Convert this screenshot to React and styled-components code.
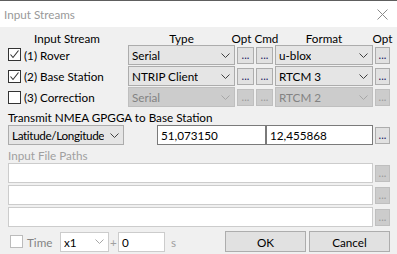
import React from 'react';
import styled, { createGlobalStyle } from 'styled-components';

const GlobalStyle = createGlobalStyle`
  html, body {
    margin: 0;
    padding: 0;
    background: #f0f0f0;
  }
  body {
    font-family: "Segoe UI", Lato, "Liberation Sans", sans-serif;
    font-size: 11.7px;
    color: #000;
  }
`;

const streams = [
  { id: 1, label: '(1) Rover', checked: true, type: 'Serial', format: 'u-blox', enabled: true },
  { id: 2, label: '(2) Base Station', checked: true, type: 'NTRIP Client', format: 'RTCM 3', enabled: true },
  { id: 3, label: '(3) Correction', checked: false, type: 'Serial', format: 'RTCM 2', enabled: false },
];

const Chevron = ({ disabled }) => (
  <svg width="9" height="5" viewBox="0 0 9 5">
    <path d="M0.5 0.5 L4.5 4.5 L8.5 0.5" fill="none" stroke={disabled ? '#a6a6a6' : '#404040'} strokeWidth="1" />
  </svg>
);

const Check = () => (
  <svg width="11" height="11" viewBox="0 0 11 11">
    <path d="M1.5 5.5 L4 8.5 L9.5 1.5" fill="none" stroke="#333" strokeWidth="1.1" />
  </svg>
);

const CheckBox = ({ checked, disabled }) => (
  <Box $disabled={disabled}>{checked && <Check />}</Box>
);

const Combo = ({ value, width, disabled, flat, tight }) => (
  <ComboBox $width={width} $disabled={disabled} $flat={flat}>
    <ComboText $tight={tight}>{value}</ComboText>
    <Chevron disabled={disabled || flat} />
  </ComboBox>
);

const App = () => {
  return (
    <Window>
      <GlobalStyle />
      <TopEdge />
      <TitleBar>
        <Title>Input Streams</Title>
        <svg width="11" height="11" viewBox="0 0 11 11">
          <path d="M0.5 0.5 L10.5 10.5 M10.5 0.5 L0.5 10.5" stroke="#8a8a8a" strokeWidth="1" />
        </svg>
      </TitleBar>
      <Body>
        <StreamGrid>
          <Head>Input Stream</Head>
          <Head>Type</Head>
          <Head $span={2}>Opt Cmd</Head>
          <Head>Format</Head>
          <Head>Opt</Head>
          {streams.map(s => (
            <React.Fragment key={s.id}>
              <StreamName>
                <CheckBox checked={s.checked} />
                <span>{s.label}</span>
              </StreamName>
              <Combo value={s.type} disabled={!s.enabled} />
              <DotButton $disabled={!s.enabled}>...</DotButton>
              <DotButton $disabled={!s.enabled}>...</DotButton>
              <Combo value={s.format} disabled={!s.enabled} />
              <DotButton $disabled={!s.enabled}>...</DotButton>
            </React.Fragment>
          ))}
        </StreamGrid>

        <Label>Transmit NMEA GPGGA to Base Station</Label>
        <PosRow>
          <Combo value="Latitude/Longitude" width={116} tight />
          <Field $width={109} $left={33}>51,073150</Field>
          <Field $width={107}>12,455868</Field>
          <DotButton>...</DotButton>
        </PosRow>

        <Label $disabled>Input File Paths</Label>
        <PathList>
          {[0, 1, 2].map(i => (
            <PathRow key={i}>
              <Field $width={365} $disabled />
              <DotButton $disabled>...</DotButton>
            </PathRow>
          ))}
        </PathList>

        <Footer>
          <TimeToggle>
            <CheckBox disabled />
            <span>Time</span>
          </TimeToggle>
          <Combo value="x1" width={49} flat />
          <Muted>+</Muted>
          <Field $width={47} $disabled>0</Field>
          <Muted $left={4}>s</Muted>
          <PushButton $left="auto">OK</PushButton>
          <PushButton>Cancel</PushButton>
        </Footer>
      </Body>
    </Window>
  );
};

const Window = styled.div`
  width: 397px;
  height: 254px;
  overflow: hidden;
  background: #f0f0f0;
`;

const TopEdge = styled.div`
  height: 1px;
  background: #5e5e5e;
`;

const TitleBar = styled.div`
  height: 26px;
  background: #fff;
  display: flex;
  align-items: center;
  justify-content: space-between;
  padding: 0 9px 0 4px;
  svg { margin-top: 1px; }
`;

const Title = styled.div`
  color: #999;
`;

const Body = styled.div`
  padding: 1px 7px 0 8px;
`;

const StreamGrid = styled.div`
  display: grid;
  grid-template-columns: 118px 107px 17px 17px 98px 15px;
  grid-template-rows: 16px repeat(3, 20px);
  column-gap: 2px;
  row-gap: 1px;
  align-items: center;
  & > :nth-child(6) { margin-bottom: 1px; }
`;

const Head = styled.div`
  grid-column: span ${p => p.$span || 1};
  display: flex;
  justify-content: center;
  white-space: nowrap;
  line-height: 16px;
  align-self: end;
  margin-bottom: -2px;
`;

const StreamName = styled.div`
  display: flex;
  align-items: center;
  gap: 3px;
  height: 20px;
`;

const Box = styled.div`
  box-sizing: border-box;
  width: 13px;
  height: 13px;
  border: 1px solid ${p => (p.$disabled ? '#bcbcbc' : '#333')};
  background: #fff;
  display: flex;
  align-items: center;
  justify-content: center;
  flex: none;
`;

const ComboBox = styled.div`
  box-sizing: border-box;
  width: ${p => (p.$width ? `${p.$width}px` : '100%')};
  height: 20px;
  display: flex;
  align-items: center;
  justify-content: space-between;
  gap: 2px;
  padding: 0 4px 0 3px;
  background: ${p => (p.$flat ? '#fff' : p.$disabled ? '#cccccc' : '#e5e5e5')};
  border: 1px solid ${p => (p.$flat ? '#cccccc' : p.$disabled ? '#bfbfbf' : '#acacac')};
  color: ${p => (p.$disabled ? '#838383' : '#000')};
  white-space: nowrap;
  flex: none;
  svg { flex: none; }
`;

const ComboText = styled.span`
  min-width: 0;
  overflow: hidden;
  letter-spacing: ${p => (p.$tight ? '-0.35px' : 'normal')};
`;

const DotButton = styled.div`
  box-sizing: border-box;
  width: 15px;
  height: 17px;
  align-self: center;
  display: flex;
  align-items: center;
  justify-content: center;
  padding-bottom: 1px;
  font-size: 11px;
  line-height: 11px;
  background: ${p => (p.$disabled ? '#cccccc' : '#e1e1e1')};
  border: 1px solid ${p => (p.$disabled ? '#bfbfbf' : '#adadad')};
  color: ${p => (p.$disabled ? '#9a9a9a' : '#1a1a5e')};
  flex: none;
  margin-left: 2px;
  ${StreamGrid} & { margin-left: 0; width: auto; }
`;

const Label = styled.div`
  height: 16px;
  line-height: 16px;
  margin-top: 2px;
  color: ${p => (p.$disabled ? '#a0a0a0' : '#000')};
`;

const PosRow = styled.div`
  display: flex;
  align-items: center;
  height: 20px;
`;

const Field = styled.div`
  box-sizing: border-box;
  width: ${p => p.$width}px;
  height: 20px;
  margin-left: ${p => p.$left || 0}px;
  padding: 0 3px;
  line-height: 18px;
  background: #fff;
  border: 1px solid ${p => (p.$disabled ? '#cccccc' : '#7a7a7a')};
  flex: none;
`;

const PathList = styled.div`
  display: flex;
  flex-direction: column;
  gap: 2px;
`;

const PathRow = styled.div`
  display: flex;
  align-items: center;
`;

const Footer = styled.div`
  display: flex;
  align-items: center;
  margin-top: 4px;
  height: 21px;
`;

const TimeToggle = styled.div`
  display: flex;
  align-items: center;
  gap: 4px;
  width: 50px;
  padding-left: 2px;
  color: #838383;
`;

const Muted = styled.span`
  color: #a0a0a0;
  width: 9px;
  margin-left: ${p => p.$left || 0}px;
  text-align: center;
`;

const PushButton = styled.div`
  box-sizing: border-box;
  width: 81px;
  height: 21px;
  margin-left: ${p => p.$left || '3px'};
  display: flex;
  align-items: center;
  justify-content: center;
  background: #e1e1e1;
  border: 1px solid #adadad;
`;

export default App;
